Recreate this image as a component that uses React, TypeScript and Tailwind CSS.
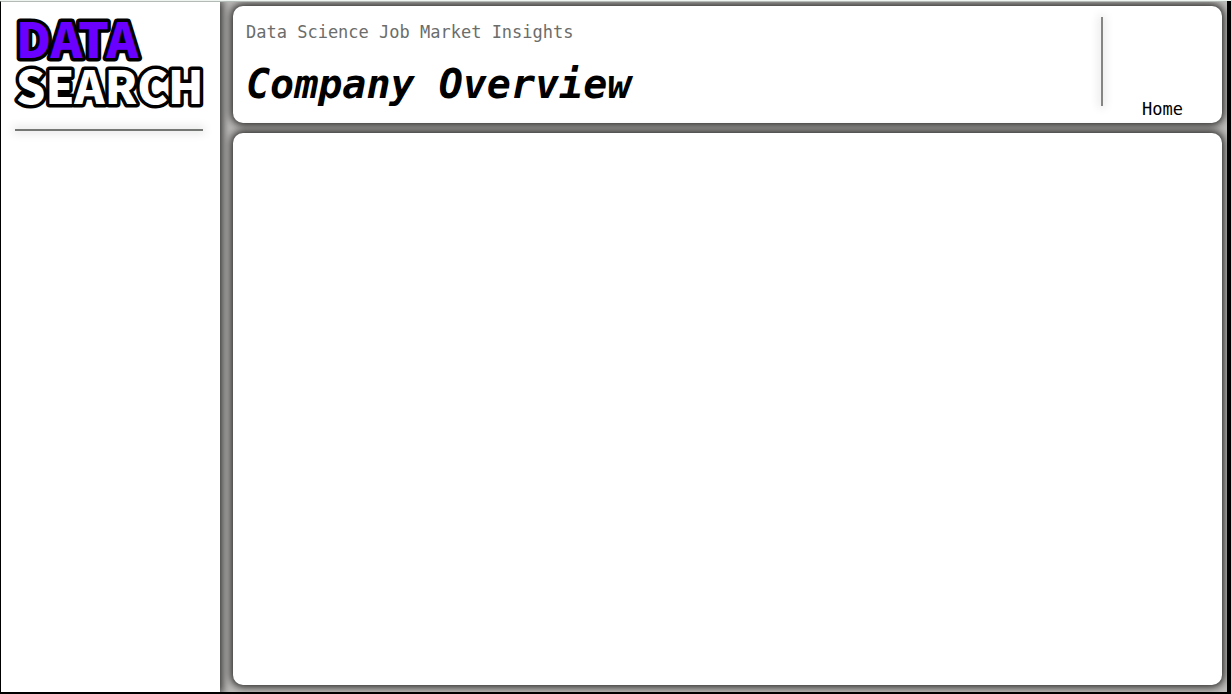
export default function App() {
  return (
    <div className="flex h-screen flex-col border-b-2 border-black bg-black font-['DejaVu_Sans_Mono',monospace]">
      <div className="h-px shrink-0 bg-[#eef4f0]" />
      <div className="mr-1 flex min-h-0 grow overflow-hidden border-t border-l border-t-[#b4bab5] border-l-black bg-[#c0bfbd]">
        <aside className="z-10 flex w-[219px] shrink-0 flex-col bg-white pt-4 pr-[17px] pl-[14px] shadow-[0_0_9px_2px_#000000d8]">
          <a href="#" className="block">
            <svg
              viewBox="0 0 188 92"
              className="w-full overflow-visible font-['Noto_Sans_CJK_SC',sans-serif] font-black [paint-order:stroke_fill]"
              stroke="#000"
              strokeWidth="7"
              strokeLinejoin="round"
            >
              <text x="1" y="40" fontSize="48" fill="#6a00ff">DATA</text>
              <text x="1" y="86" fontSize="46" fill="#fff">SEARCH</text>
            </svg>
          </a>
          <hr className="mt-[19px] border-t-2 border-[#757774] shadow-[0_0_10px_2px_#00000020]" />
        </aside>
        <div className="flex min-w-0 grow flex-col gap-[10px] pt-1 pr-[5px] pb-[7px] pl-[13px]">
          <header className="flex h-[117px] shrink-0 rounded-[10px] bg-white pl-[13px] shadow-[0_0_9px_2px_#000000d8]">
            <div className="grow pt-4">
              <p className="text-[17px] leading-5 text-[#6b6d6b]">Data Science Job Market Insights</p>
              <h1 className="mt-[18px] text-[40px] leading-[48px] font-bold italic">Company Overview</h1>
            </div>
            <div className="mt-[11px] mb-[17px] w-0.5 bg-[#858583] shadow-[0_0_10px_2px_#0000001c]" />
            <nav className="flex w-[119px] items-end justify-center pb-1">
              <a href="#" className="text-[17px] leading-5 text-black">
                Home
              </a>
            </nav>
          </header>
          <main className="grow rounded-[10px] bg-white shadow-[0_0_9px_2px_#000000d8]" />
        </div>
      </div>
    </div>
  );
}
